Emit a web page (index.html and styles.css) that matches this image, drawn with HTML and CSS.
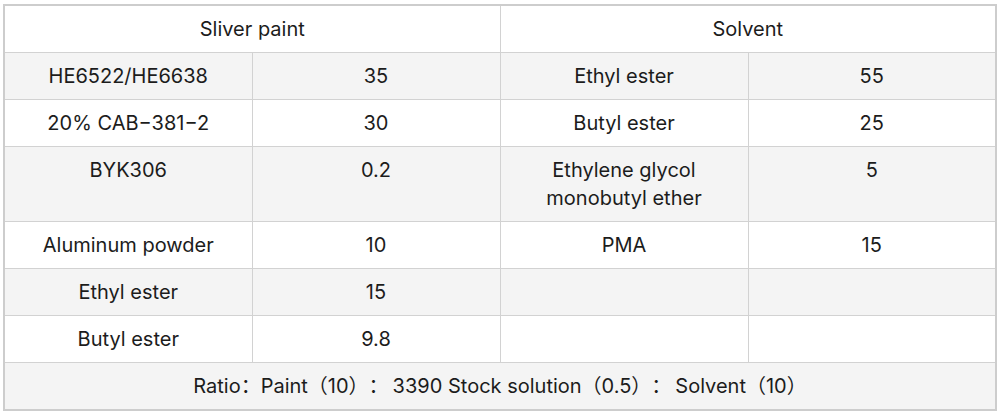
FILE: index.html
```html
<!DOCTYPE html>
<html>
<head>
<meta charset="utf-8">
<link rel="stylesheet" href="styles.css">
</head>
<body>
<table class="recipe">
  <tr class="head">
    <td colspan="2">Sliver paint</td>
    <td colspan="2">Solvent</td>
  </tr>
  <tr class="shade">
    <td>HE6522/HE6638</td><td>35</td><td>Ethyl ester</td><td>55</td>
  </tr>
  <tr>
    <td>20% CAB−381−2</td><td>30</td><td>Butyl ester</td><td>25</td>
  </tr>
  <tr class="shade">
    <td>BYK306</td><td>0.2</td><td>Ethylene glycol<br>monobutyl ether</td><td>5</td>
  </tr>
  <tr>
    <td>Aluminum powder</td><td>10</td><td>PMA</td><td>15</td>
  </tr>
  <tr class="shade">
    <td>Ethyl ester</td><td>15</td><td></td><td></td>
  </tr>
  <tr>
    <td>Butyl ester</td><td>9.8</td><td></td><td></td>
  </tr>
  <tr class="shade">
    <td colspan="4">Ratio：Paint（10）<span class="sep">：</span>3390 Stock solution（0.5）<span class="sep">：</span>Solvent（10）</td>
  </tr>
</table>
</body>
</html>
```
FILE: styles.css
```css
html, body {
  margin: 0;
  padding: 0;
  background: #ffffff;
}
body {
  padding: 4px 3px 0 3px;
}
.recipe {
  width: 994px;
  border-collapse: collapse;
  table-layout: fixed;
  border: 2px solid #cdcdcd;
  font-family: Inter, "Noto Sans CJK SC", sans-serif;
  font-size: 20px;
  color: #1c1c1c;
}
.recipe td {
  border: 1px solid #d2d2d2;
  text-align: center;
  vertical-align: top;
  padding: 9px 4px 9px 4px;
  line-height: 28px;
  height: 28px;
}
.recipe .shade td {
  background: #f4f4f4;
}
.sep {
  padding: 0 4px 0 10px;
}
```
